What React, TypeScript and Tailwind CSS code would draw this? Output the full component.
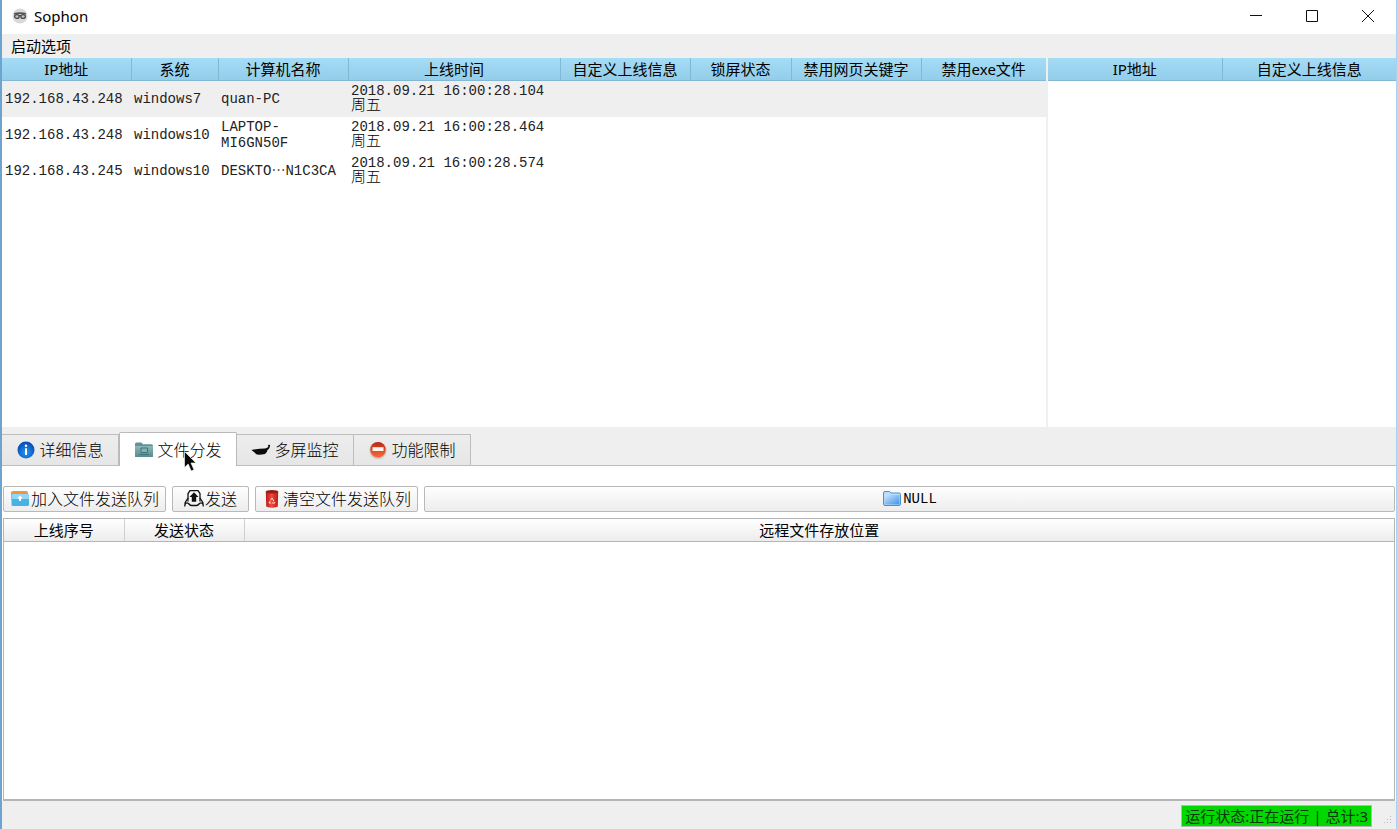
import { useState } from 'react';
import type { ReactNode } from 'react';

type Host = { ip: string; system: string; name: string; time: string; day: string };

const HOSTS: Host[] = [
  { ip: '192.168.43.248', system: 'windows7', name: 'quan-PC', time: '2018.09.21 16:00:28.104', day: '周五' },
  { ip: '192.168.43.248', system: 'windows10', name: 'LAPTOP-MI6GN50F', time: '2018.09.21 16:00:28.464', day: '周五' },
  { ip: '192.168.43.245', system: 'windows10', name: 'DESKTO…N1C3CA', time: '2018.09.21 16:00:28.574', day: '周五' },
];

const HOST_COLUMNS = [
  { label: 'IP地址', width: 'w-[129px]' },
  { label: '系统', width: 'w-[87px]' },
  { label: '计算机名称', width: 'w-[130px]' },
  { label: '上线时间', width: 'w-[212px]' },
  { label: '自定义上线信息', width: 'w-[130px]' },
  { label: '锁屏状态', width: 'w-[101px]' },
  { label: '禁用网页关键字', width: 'w-[130px]' },
  { label: '禁用exe文件', width: 'w-auto' },
];

const TABS = [
  { id: 'detail', label: '详细信息', icon: <InfoIcon /> },
  { id: 'files', label: '文件分发', icon: <TealFolderIcon /> },
  { id: 'screens', label: '多屏监控', icon: <PanIcon /> },
  { id: 'limits', label: '功能限制', icon: <NoEntryIcon /> },
];

export default function App() {
  const [tab, setTab] = useState('files');
  const [selected, setSelected] = useState(0);

  return (
    <div className="relative flex h-screen flex-col overflow-hidden border-l-2 border-r border-l-[#6fa3cf] border-r-[#a5d5ec] bg-[#efefef] font-['Noto_Sans','Noto_Sans_CJK_SC',sans-serif] text-[15px] text-black">
      <TitleBar />

      <nav className="flex h-6 items-center px-2">
        <button className="px-px leading-6">启动选项</button>
      </nav>

      <main className="flex min-h-0 flex-1 flex-col">
        <div className="flex min-h-0 flex-[369] gap-0.5">
          <section className="min-w-0 flex-[3] overflow-hidden bg-white">
            <table className="w-full table-fixed border-collapse">
              <thead>
                <tr>
                  {HOST_COLUMNS.map((c) => (
                    <BlueHead key={c.label} width={c.width}>{c.label}</BlueHead>
                  ))}
                </tr>
              </thead>
              <tbody className="font-['Liberation_Mono','Noto_Sans_CJK_SC',monospace] text-sm leading-4 text-[#222]">
                {HOSTS.map((h, i) => (
                  <tr key={h.name} onClick={() => setSelected(i)} className={i === selected ? 'h-9 bg-[#efefef]' : 'h-9'}>
                    <td className="pl-[3px] whitespace-nowrap">{h.ip}</td>
                    <td className="pl-[3px] whitespace-nowrap">{h.system}</td>
                    <td className="pr-1 pl-[3px]"><HostName name={h.name} /></td>
                    <td className="pl-[3px]">
                      <div className="whitespace-nowrap">{h.time}</div>
                      <div className="text-[15px] leading-4 font-light text-black">{h.day}</div>
                    </td>
                    <td colSpan={4} />
                  </tr>
                ))}
              </tbody>
            </table>
          </section>

          <section className="min-w-0 flex-1 overflow-hidden bg-white">
            <table className="w-full table-fixed border-collapse">
              <thead>
                <tr>
                  <BlueHead width="w-1/2">IP地址</BlueHead>
                  <BlueHead width="w-1/2">自定义上线信息</BlueHead>
                </tr>
              </thead>
            </table>
          </section>
        </div>

        <section className="flex min-h-0 flex-[374] flex-col">
          <div role="tablist" className="flex h-[39px] shrink-0 items-end border-b border-[#bdbdbd]">
            {TABS.map((t) => (
              <button
                key={t.id}
                role="tab"
                aria-selected={t.id === tab}
                onClick={() => setTab(t.id)}
                className={
                  t.id === tab
                    ? '-mb-px flex h-[34px] w-[118px] items-center justify-center gap-[3px] rounded-t-xs border border-b-0 border-[#b9b9b9] bg-white text-base'
                    : 'flex h-[31px] w-[117px] items-center justify-center gap-[3px] border-t border-r border-[#bdbdbd] bg-linear-to-b from-[#ededed] to-[#e6e6e6] text-base'
                }
              >
                {t.icon}
                <span className="font-light">{t.label}</span>
              </button>
            ))}
          </div>

          <div className="flex min-h-0 flex-1 flex-col gap-1.5 bg-white px-px pt-5">
            <div className="flex gap-1.5">
              <ToolButton width="w-[163px]" icon={<AddFileIcon />}>加入文件发送队列</ToolButton>
              <ToolButton width="w-[77px]" icon={<SendIcon />}>发送</ToolButton>
              <ToolButton width="w-[163px]" icon={<TrashIcon />}>清空文件发送队列</ToolButton>
              <ToolButton width="flex-1" icon={<BlueFolderIcon />}>
                <span className="font-['Liberation_Mono',monospace] text-sm">NULL</span>
              </ToolButton>
            </div>

            <div className="min-h-0 flex-1 overflow-hidden border border-b-2 border-[#b5b5b5]">
              <table className="w-full table-fixed border-collapse">
                <thead>
                  <tr>
                    <GrayHead width="w-[120px]">上线序号</GrayHead>
                    <GrayHead width="w-[120px]">发送状态</GrayHead>
                    <GrayHead width="w-auto">远程文件存放位置</GrayHead>
                  </tr>
                </thead>
              </table>
            </div>
          </div>
        </section>
      </main>

      <footer className="flex h-7 shrink-0 items-center justify-end pt-0.5 pr-1">
        <output className="mr-2.5 border border-[#b8b8b8] bg-[#00d800] px-[3px] leading-5 whitespace-pre text-[#063806]">
          运行状态:正在运行 | 总计:3
        </output>
        <SizeGrip />
      </footer>

      <Pointer />
    </div>
  );
}

function TitleBar() {
  return (
    <header className="flex h-[34px] shrink-0 items-start bg-white pl-2.5">
      <span className="flex h-8 items-center">
        <SophonIcon />
      </span>
      <h1 className="ml-1.5 flex-1 text-[15px] leading-8">Sophon</h1>
      <button aria-label="最小化" className="flex h-8 w-14 items-center justify-center">
        <svg width="12" height="12" viewBox="0 0 12 12" stroke="#111"><path d="M0 5.5h12" /></svg>
      </button>
      <button aria-label="最大化" className="flex h-8 w-14 items-center justify-center">
        <svg width="12" height="12" viewBox="0 0 12 12" fill="none" stroke="#111"><path d="M.5.5h11v11H.5z" /></svg>
      </button>
      <button aria-label="关闭" className="flex h-8 w-14 items-center justify-center">
        <svg width="12" height="12" viewBox="0 0 12 12" stroke="#111"><path d="M0 0l12 12M12 0L0 12" /></svg>
      </button>
    </header>
  );
}

// the CJK face has the full-width, centred ellipsis
function HostName({ name }: { name: string }) {
  const [head, tail] = name.split('…');
  if (tail === undefined) return <>{name}</>;
  return (
    <span className="whitespace-nowrap">
      {head}
      <span lang="zh-CN" className="font-['Noto_Sans_CJK_SC',sans-serif] leading-none">…</span>
      {tail}
    </span>
  );
}

function BlueHead({ width, children }: { width: string; children: ReactNode }) {
  return (
    <th className={`${width} h-[22px] border-r border-b border-[#83b8d4] bg-linear-to-b from-[#a5dcf6] to-[#93cde9] p-0 text-center leading-[22px] font-normal whitespace-nowrap last:border-r-0`}>
      {children}
    </th>
  );
}

function GrayHead({ width, children }: { width: string; children: ReactNode }) {
  return (
    <th className={`${width} h-[22px] border-r border-b border-r-[#cfcfcf] border-b-[#b5b5b5] bg-linear-to-b from-white to-[#ececec] p-0 text-center leading-[22px] font-normal last:border-r-0`}>
      {children}
    </th>
  );
}

function ToolButton({ width, icon, children }: { width: string; icon: ReactNode; children: ReactNode }) {
  return (
    <button className={`${width} flex h-[26px] items-center justify-center gap-px rounded-xs border border-[#b9b9b9] bg-linear-to-b from-[#fefefe] to-[#ededed] text-base leading-6 font-light whitespace-nowrap`}>
      {icon}
      {children}
    </button>
  );
}

function SophonIcon() {
  return (
    <svg width="16" height="16" viewBox="0 0 16 16">
      <circle cx="8" cy="8" r="7.5" fill="#d9d9d6" />
      <path d="M2 5.800q6-1.400 12 0" stroke="#555" strokeWidth="1.600" fill="none" />
      <ellipse cx="4.900" cy="8.500" rx="2.300" ry="1.900" fill="#c4c4c4" stroke="#484848" strokeWidth="1.300" />
      <ellipse cx="11.100" cy="8.500" rx="2.300" ry="1.900" fill="#c4c4c4" stroke="#484848" strokeWidth="1.300" />
      <path d="M7 7.500h2" stroke="#484848" strokeWidth="1.200" />
    </svg>
  );
}

function InfoIcon() {
  return (
    <svg width="20" height="20" viewBox="0 0 20 20">
      <defs>
        <radialGradient id="info" cx=".5" cy=".65" r=".6">
          <stop offset="0" stopColor="#1d9bf5" />
          <stop offset="1" stopColor="#0b4bb5" />
        </radialGradient>
      </defs>
      <circle cx="10" cy="10" r="8.500" fill="url(#info)" />
      <circle cx="10" cy="5.800" r="1.200" fill="#fff" />
      <path d="M9 8.200h2v6.800H9z" fill="#fff" />
    </svg>
  );
}

function TealFolderIcon() {
  return (
    <svg width="20" height="20" viewBox="0 0 20 20">
      <defs>
        <linearGradient id="teal" x1="0" y1="0" x2="0" y2="1">
          <stop offset="0" stopColor="#8bb9b8" />
          <stop offset="1" stopColor="#568b8f" />
        </linearGradient>
      </defs>
      <path d="M1 4q0-1.500 1.500-1.500h5L9 4.200h8.500Q19 4.200 19 5.700V16q0 1-1 1H2q-1 0-1-1z" fill="#5f9395" />
      <path d="M1 6h18v10q0 1-1 1H2q-1 0-1-1z" fill="url(#teal)" />
      <path d="M7 8h6.500v4.500H7z" fill="#82b4b4" stroke="#3f7579" />
      <path d="M5.500 14.500h9.500" stroke="#3f7579" />
    </svg>
  );
}

function PanIcon() {
  return (
    <svg width="20" height="20" viewBox="0 0 20 20">
      <path d="M.5 10q7-1.300 13.500-1.500 2.800-.2 3.500-2.200L16.800 5.300q1.300-.8 2.300-.2l-.3 2q-.5 2-2.300 3-.3 2.800-2.500 3.900-4.200 1-8 .6-1.500-.3-2.300-2Q1.800 11.300.5 10z" fill="#0b0b0b" />
    </svg>
  );
}

function NoEntryIcon() {
  return (
    <svg width="20" height="20" viewBox="0 0 20 20">
      <defs>
        <linearGradient id="stop" x1="0" y1="0" x2="0" y2="1">
          <stop offset="0" stopColor="#b52a10" />
          <stop offset="1" stopColor="#ff6a3c" />
        </linearGradient>
      </defs>
      <circle cx="10" cy="10.500" r="8.800" fill="#cfcbc8" />
      <circle cx="10" cy="9.800" r="7.700" fill="url(#stop)" />
      <path d="M4.500 7.200h11v3.800h-11z" fill="#fff4ee" />
    </svg>
  );
}

function AddFileIcon() {
  return (
    <svg width="20" height="20" viewBox="0 0 20 20">
      <rect x="1" y="2" width="17" height="9" rx="2" fill="#ef9440" />
      <path d="M1.500 6.500q0-1.500 1.500-1.500h14.500q1.500 0 1.500 1.500v9q0 1.500-1.500 1.500H3q-1.500 0-1.500-1.500z" fill="#46b3e6" />
      <path d="M1.500 6.500Q1.500 5 3 5h14.500Q19 5 19 6.500V10H1.500z" fill="#93d6f3" />
      <path d="M10 6.500l3 3h-2V12H9V9.500H7z" fill="#fff" />
    </svg>
  );
}

function SendIcon() {
  return (
    <svg width="20" height="20" viewBox="0 0 20 20" fill="none" stroke="#111" strokeWidth="1.300">
      <path d="M4 12.500V4.500L6 1.700h8l2 2.800v8" />
      <path d="M4 9l-2.800 4.500-.5 4M16 9l2.800 4.500.5 4M1 15.500q1.500-2.500 3.500-1 1.500 2 3 2h5q1.500 0 3-2 2-1.500 3.500 1" />
      <path d="M10 3.300L14.500 8h-2.300v4.800H7.800V8H5.500z" fill="#111" stroke="none" />
    </svg>
  );
}

function TrashIcon() {
  return (
    <svg width="20" height="20" viewBox="0 0 20 20">
      <defs>
        <linearGradient id="bin">
          <stop offset="0" stopColor="#b81c16" />
          <stop offset=".45" stopColor="#f04a3c" />
          <stop offset="1" stopColor="#b81c16" />
        </linearGradient>
      </defs>
      <path d="M3.800 2.500h12.400l-.4 15q-5.800 2.500-11.600 0z" fill="url(#bin)" />
      <ellipse cx="10" cy="2.700" rx="6.300" ry="1.800" fill="#9c1a14" />
      <path d="M10 9l3 5H7z" fill="none" stroke="#ffd8d2" strokeLinejoin="round" strokeDasharray="4 1" />
    </svg>
  );
}

function BlueFolderIcon() {
  return (
    <svg width="20" height="20" viewBox="0 0 20 20">
      <defs>
        <linearGradient id="folder" x1="0" y1="0" x2="1" y2="1">
          <stop offset="0" stopColor="#cbe6fd" />
          <stop offset="1" stopColor="#3f93e4" />
        </linearGradient>
      </defs>
      <path d="M1.500 4q0-1.500 1.500-1.500h4.500L9 4h8q1.500 0 1.500 1.500v9.500q0 1.500-1.500 1.500H3q-1.500 0-1.500-1.500z" fill="#b9defc" stroke="#4a8fd6" />
      <path d="M2.500 6h15v9q0 .5-.5.500H3q-.5 0-.5-.5z" fill="url(#folder)" />
    </svg>
  );
}

function SizeGrip() {
  return (
    <svg width="10" height="20" viewBox="0 0 10 20" fill="#bcbcbc">
      <path d="M8 10h1v1H8zM5 13h1v1H5zM8 13h1v1H8zM2 16h1v1H2zM5 16h1v1H5zM8 16h1v1H8z" />
    </svg>
  );
}

// mouse cursor resting over the file tab
function Pointer() {
  return (
    <svg className="pointer-events-none absolute top-[451px] left-[182px]" width="14" height="21" viewBox="0 0 14 21">
      <path d="M.5.500v16l3.700-3.500 3 7 2.800-1.200-3-6.800h5z" fill="#0a0a0a" stroke="#fff" strokeWidth=".6" />
    </svg>
  );
}
